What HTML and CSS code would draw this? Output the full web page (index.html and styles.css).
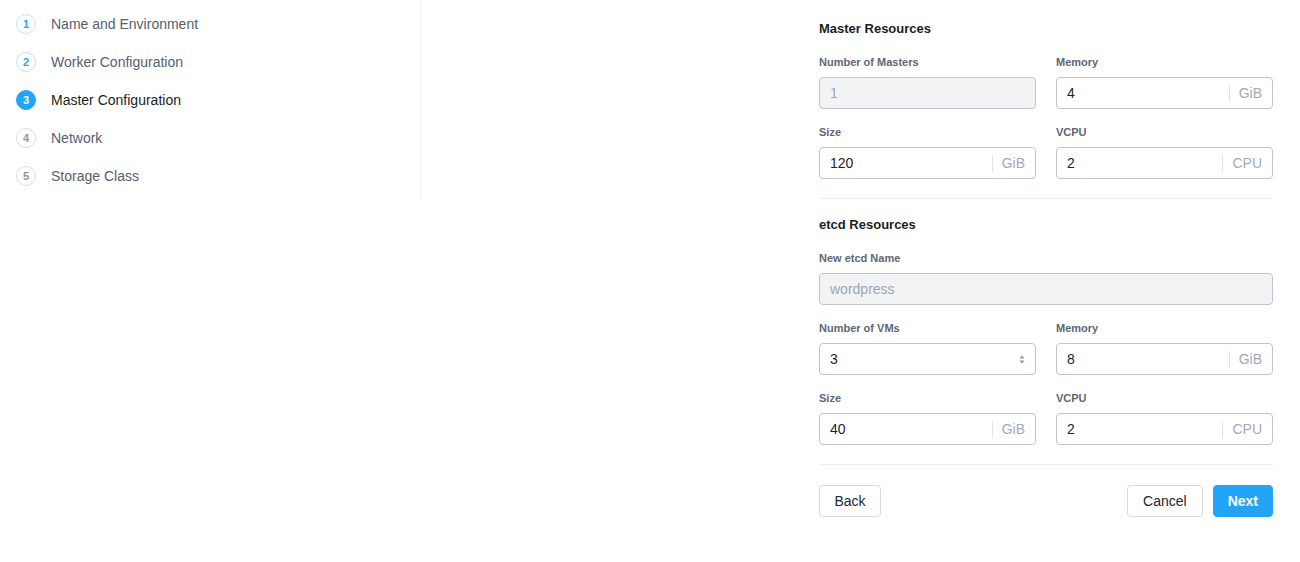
FILE: index.html
```html
<!DOCTYPE html>
<html lang="en">
<head>
<meta charset="utf-8">
<title>Master Configuration</title>
<link rel="stylesheet" href="styles.css">
</head>
<body>
<div class="layout">
  <aside class="sidebar">
    <ol class="steps">
      <li class="step done"><span class="num">1</span><span class="step-label">Name and Environment</span></li>
      <li class="step done"><span class="num">2</span><span class="step-label">Worker Configuration</span></li>
      <li class="step active"><span class="num">3</span><span class="step-label">Master Configuration</span></li>
      <li class="step"><span class="num">4</span><span class="step-label">Network</span></li>
      <li class="step"><span class="num">5</span><span class="step-label">Storage Class</span></li>
    </ol>
  </aside>
  <main class="main">
    <form class="form">
      <section class="section">
        <h3 class="section-title">Master Resources</h3>
        <div class="grid">
          <div class="field">
            <label class="label">Number of Masters</label>
            <div class="input disabled"><span class="value">1</span></div>
          </div>
          <div class="field">
            <label class="label">Memory</label>
            <div class="input"><span class="value">4</span><span class="unit">GiB</span></div>
          </div>
          <div class="field">
            <label class="label">Size</label>
            <div class="input"><span class="value">120</span><span class="unit">GiB</span></div>
          </div>
          <div class="field">
            <label class="label">VCPU</label>
            <div class="input"><span class="value">2</span><span class="unit">CPU</span></div>
          </div>
        </div>
      </section>
      <section class="section">
        <h3 class="section-title">etcd Resources</h3>
        <div class="grid">
          <div class="field wide">
            <label class="label">New etcd Name</label>
            <div class="input disabled"><span class="value">wordpress</span></div>
          </div>
          <div class="field">
            <label class="label">Number of VMs</label>
            <div class="input select"><span class="value">3</span>
              <svg class="caret" width="6" height="9" viewBox="0 0 6 9"><path d="M3 0.5L5.5 3.5H0.5Z M3 8.5L5.5 5.5H0.5Z" fill="#8c939e"/></svg>
            </div>
          </div>
          <div class="field">
            <label class="label">Memory</label>
            <div class="input"><span class="value">8</span><span class="unit">GiB</span></div>
          </div>
          <div class="field">
            <label class="label">Size</label>
            <div class="input"><span class="value">40</span><span class="unit">GiB</span></div>
          </div>
          <div class="field">
            <label class="label">VCPU</label>
            <div class="input"><span class="value">2</span><span class="unit">CPU</span></div>
          </div>
        </div>
      </section>
      <div class="actions">
        <button type="button" class="btn back">Back</button>
        <div class="actions-right">
          <button type="button" class="btn">Cancel</button>
          <button type="button" class="btn primary">Next</button>
        </div>
      </div>
    </form>
  </main>
</div>
</body>
</html>
```

FILE: styles.css
```css
* { box-sizing: border-box; }
html, body { margin: 0; padding: 0; background: #fff; }
body {
  font-family: "Liberation Sans", Arial, sans-serif;
  color: #22272e;
  -webkit-font-smoothing: antialiased;
}
.layout { display: flex; align-items: flex-start; }

.sidebar {
  width: 421px;
  flex: none;
  border-right: 1px solid #f0f1f2;
  padding: 5px 0;
}
.steps { list-style: none; margin: 0; padding: 0 0 0 16px; }
.step {
  display: flex;
  align-items: center;
  height: 38px;
  font-size: 14px;
  color: #566070;
}
.num {
  width: 20px;
  height: 20px;
  border-radius: 50%;
  border: 1px solid #d9dce1;
  color: #8e949e;
  font-size: 11px;
  font-weight: 700;
  display: flex;
  align-items: center;
  justify-content: center;
  margin-right: 15px;
  flex: none;
}
.step.done .num { border-color: #bfe2fb; color: #2aa3f2; }
.step.active .num { background: #22a5f7; border-color: #22a5f7; color: #fff; }
.step.active { color: #1a1e24; }

.main {
  flex: 1;
  display: flex;
  justify-content: flex-end;
  padding: 21px 27px 0 0;
}
.form { width: 454px; }
.section { border-bottom: 1px solid #eceef1; padding-bottom: 19px; margin-bottom: 18px; }
.section-title {
  margin: 0 0 18px;
  font-size: 13px;
  line-height: 16px;
  font-weight: 700;
  color: #1a1e24;
}
.grid {
  display: grid;
  grid-template-columns: 1fr 1fr;
  column-gap: 20px;
  row-gap: 16px;
}
.field.wide { grid-column: 1 / -1; }
.label {
  display: block;
  font-size: 11px;
  line-height: 14px;
  font-weight: 700;
  color: #5e6676;
  margin-bottom: 8px;
}
.input {
  height: 32px;
  border: 1px solid #bfc5cf;
  border-radius: 4px;
  display: flex;
  align-items: center;
  padding: 0 10px;
  font-size: 14px;
  color: #1f2329;
  background: #fff;
}
.input .value { flex: 1; }
.input.disabled { background: #f2f3f5; color: #a0a6b1; }
.unit {
  color: #a3a9b5;
  border-left: 1px solid #dfe2e6;
  padding-left: 9px;
  line-height: 17px;
}
.caret { flex: none; }

.actions {
  display: flex;
  justify-content: space-between;
  padding-top: 2px;
}
.actions-right { display: flex; gap: 10px; }
.btn {
  height: 32px;
  padding: 0 15px;
  border: 1px solid #d7dade;
  border-radius: 4px;
  background: #fff;
  font-family: "Liberation Sans", Arial, sans-serif;
  font-size: 14px;
  color: #22272e;
}
.btn.back { padding: 0 14.5px; }
.btn.primary {
  background: #22a5f7;
  border-color: #22a5f7;
  color: #fff;
  font-weight: 700;
  padding: 0 14px;
}
```
